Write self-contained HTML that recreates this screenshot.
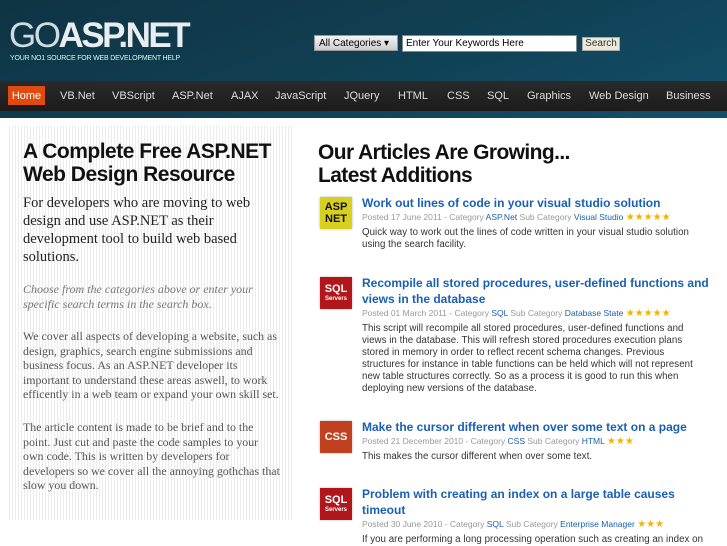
<!DOCTYPE html><html><head><style>
body{margin:0;width:727px;height:545px;overflow:hidden;background:#fff;font-family:"Liberation Sans",sans-serif;position:relative}
.hd{position:absolute;left:0;top:0;width:727px;height:118px;background:linear-gradient(160deg,#0f3444 0%,#103f52 50%,#12506a 100%)}
.logo{position:absolute;left:9px;top:16px;font-size:35px;letter-spacing:-2.5px;color:#e8eef0;line-height:40px}
.logo span{font-weight:300;color:#cfdde2}
.logo b{font-weight:bold}
.tag{position:absolute;left:10px;top:55px;font-size:7px;color:#cfe;letter-spacing:-0.2px}
.sel{position:absolute;left:314px;top:35px;height:16px;background:linear-gradient(#f4f4f4,#ccc);border:1px solid #999;font-size:10px;line-height:15px;padding-left:4px;box-sizing:border-box;width:84px}
.inp{position:absolute;left:402px;top:35px;width:175px;height:17px;background:#fff;border:1px solid #888;font-size:10px;line-height:16px;padding-left:3px;box-sizing:border-box}
.btn{position:absolute;left:582px;top:37px;width:38px;height:14px;background:#ede8d8;border:1px solid #aaa;font-size:10px;line-height:12px;text-align:center;color:#333;box-sizing:border-box}
.nav{position:absolute;left:0;top:81px;width:727px;height:30px;background:linear-gradient(#2a2a2a,#1c1c1c)}
.nav span{position:absolute;top:9px;font-size:11px;color:#ddd}
.home{position:absolute;left:8px;top:86px;width:37px;height:19px;background:#e04a10;color:#fff;font-size:11px;line-height:20px;text-align:center}
.left{position:absolute;left:7px;top:126px;width:286px;height:394px;background:repeating-linear-gradient(90deg,#fff 0,#fff 2px,#ececec 2px,#ececec 3px)}
.left h1{position:absolute;left:16px;top:14px;margin:0;font-size:21px;line-height:23px;letter-spacing:-0.5px;color:#111;font-weight:bold;white-space:nowrap}
.sf{font-family:"Liberation Serif",serif;position:absolute;left:16px;color:#333;white-space:nowrap}
h2{position:absolute;left:318px;top:141px;margin:0;font-size:21px;line-height:23px;letter-spacing:-0.6px;color:#111;white-space:nowrap}
.it{position:absolute;left:320px;width:400px}
.ic{position:absolute;left:0;top:0;width:32px;height:32px;box-shadow:0 0 2px #aaa;color:#fff;font-weight:bold;font-size:10px;text-align:center;line-height:12px;display:flex;flex-direction:column;align-items:center;justify-content:center}
.t{position:absolute;left:42px;top:-2px;width:350px;font-size:12px;line-height:16px;color:#1a5fb4;font-weight:bold}
.m{font-size:8.5px;color:#999;position:absolute;left:42px;white-space:nowrap}
.m a{color:#1a5fb4}
.st{color:#f4b400;font-size:10px}
.d{position:absolute;left:42px;width:360px;font-size:9.7px;line-height:12px;color:#333;letter-spacing:0.05px}
</style></head><body>
<div class="hd"></div>
<div class="logo"><span>GO</span><b>ASP.NET</b></div>
<div class="tag">YOUR NO1 SOURCE FOR WEB DEVELOPMENT HELP</div>
<div class="sel">All Categories ▾</div>
<div class="inp">Enter Your Keywords Here</div>
<div class="btn">Search</div>
<div class="nav">
<span style="left:60px">VB.Net</span><span style="left:112px">VBScript</span><span style="left:172px">ASP.Net</span><span style="left:231px">AJAX</span><span style="left:275px">JavaScript</span><span style="left:344px">JQuery</span><span style="left:398px">HTML</span><span style="left:447px">CSS</span><span style="left:487px">SQL</span><span style="left:527px">Graphics</span><span style="left:589px">Web Design</span><span style="left:666px">Business</span></div>
<div class="home">Home</div>
<div class="left"><h1>A Complete Free ASP.NET<br>Web Design Resource</h1>
<div class="sf" style="top:68px;font-size:14.5px;line-height:18px;color:#222">For developers who are moving to web<br>design and use ASP.NET as their<br>development tool to build web based<br>solutions.</div>
<div class="sf" style="top:156px;font-size:12px;line-height:15px;font-style:italic;color:#777">Choose from the categories above or enter your<br>specific search terms in the search box.</div>
<div class="sf" style="top:203px;font-size:11.9px;line-height:14.6px;color:#555">We cover all aspects of developing a website, such as<br>design, graphics, search engine submissions and<br>business focus. As an ASP.NET developer its<br>important to understand these areas aswell, to work<br>efficently in a web team or expand your own skill set.</div>
<div class="sf" style="top:294px;font-size:11.9px;line-height:14.6px;color:#555">The article content is made to be brief and to the<br>point. Just cut and paste the code samples to your<br>own code. This is written by developers for<br>developers so we cover all the annoying gothchas that<br>slow you down.</div>
</div>
<h2>Our Articles Are Growing...<br>Latest Additions</h2>
<div class="it" style="top:197px"><div class="ic" style="background:#d8d020;color:#111;font-size:11px"><div>ASP</div><div>NET</div></div>
<div class="t">Work out lines of code in your visual studio solution</div>
<div class="m" style="top:15px">Posted 17 June 2011 - Category <a>ASP.Net</a> Sub Category <a>Visual Studio</a> <span class="st">★★★★★</span></div>
<div class="d" style="top:30px">Quick way to work out the lines of code written in your visual studio solution<br>using the search facility.</div></div>
<div class="it" style="top:277px"><div class="ic" style="background:#b0161a"><div style="font-size:11px">SQL</div><div style="font-size:6px;line-height:8px">Servers</div></div>
<div class="t">Recompile all stored procedures, user-defined functions and views in the database</div>
<div class="m" style="top:31px">Posted 01 March 2011 - Category <a>SQL</a> Sub Category <a>Database State</a> <span class="st">★★★★★</span></div>
<div class="d" style="top:46px;white-space:nowrap">This script will recompile all stored procedures, user-defined functions and<br>views in the database. This will refresh stored procedures execution plans<br>stored in memory in order to reflect recent schema changes. Previous<br>structures for instance in table functions can be held which will not represent<br>new table structures correctly. So as a process it is good to run this when<br>deploying new versions of the database.</div></div>
<div class="it" style="top:421px"><div class="ic" style="background:#c04020;font-size:11px"><div>CSS</div></div>
<div class="t">Make the cursor different when over some text on a page</div>
<div class="m" style="top:15px">Posted 21 December 2010 - Category <a>CSS</a> Sub Category <a>HTML</a> <span class="st">★★★</span></div>
<div class="d" style="top:30px">This makes the cursor different when over some text.</div></div>
<div class="it" style="top:488px"><div class="ic" style="background:#b0161a"><div style="font-size:11px">SQL</div><div style="font-size:6px;line-height:8px">Servers</div></div>
<div class="t">Problem with creating an index on a large table causes<br>timeout</div>
<div class="m" style="top:31px">Posted 30 June 2010 - Category <a>SQL</a> Sub Category <a>Enterprise Manager</a> <span class="st">★★★</span></div>
<div class="d" style="top:46px;white-space:nowrap">If you are performing a long processing operation such as creating an index on</div></div>
</body></html>
